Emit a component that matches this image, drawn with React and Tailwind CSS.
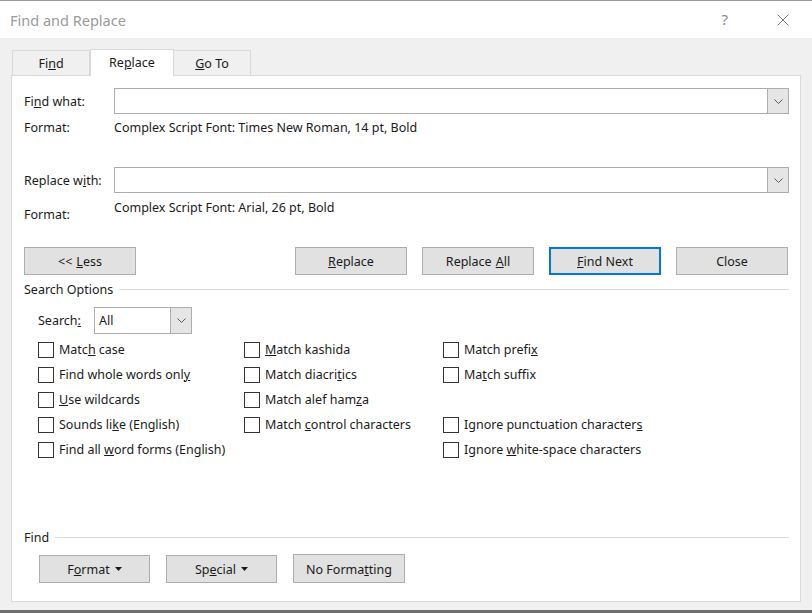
import React from 'react'

const Chevron = () => (
  <svg width="9" height="5" viewBox="0 0 9 5" className="block">
    <path d="M0.5 0.5 L4.5 4.5 L8.5 0.5" fill="none" stroke="#5a5a5a" strokeWidth="1" />
  </svg>
)

const Caret = () => (
  <svg width="7" height="4" viewBox="0 0 7 4" className="inline-block ml-[5px] mb-[2px]">
    <path d="M0 0 L7 0 L3.5 4 Z" fill="#1a1a1a" />
  </svg>
)

const Combo = ({ className = '' }) => (
  <div className={`flex h-[26px] border border-[#adadad] bg-white ${className}`}>
    <div className="flex-1" />
    <div className="w-[21px] flex items-center justify-center bg-[#e5e5e5] border-l border-[#adadad]">
      <Chevron />
    </div>
  </div>
)

const Button = ({ children, primary, className = '' }) => (
  <div
    className={`h-[28px] flex items-center justify-center pt-[2px] bg-[#e1e1e1] ${
      primary ? 'border-2 border-[#0078d7]' : 'border border-[#adadad]'
    } ${className}`}
  >
    {children}
  </div>
)

const Check = ({ children }) => (
  <div className="h-[25px] flex items-center gap-[5px]">
    <div className="w-[16px] h-[16px] border border-[#333333] bg-white shrink-0" />
    <span>{children}</span>
  </div>
)

export default function App() {
  return (
    <div className="w-[812px] h-[613px] bg-[#f0f0f0] overflow-hidden flex flex-col font-['Noto_Sans',sans-serif] text-[12.5px] leading-[16px] text-[#1a1a1a]">
      <div className="h-px bg-[#9a9a9a]" />
      <div className="h-[37px] bg-white flex items-center px-[10px]">
        <span className="text-[14.5px] text-[#9a9a9a] flex-1">Find and Replace</span>
        <span className="text-[15px] text-[#8a8a8a] mr-[49px] mt-[-1px]">?</span>
        <svg width="12" height="12" viewBox="0 0 12 12" className="mr-[13px]">
          <path d="M0.5 0.5 L11.5 11.5 M11.5 0.5 L0.5 11.5" stroke="#7a7a7a" strokeWidth="1" />
        </svg>
      </div>

      <div className="flex-1 flex flex-col px-[11px] pt-[10px]">
        <div className="flex items-end h-[27px] pl-px">
          <div className="w-[78px] h-[25px] flex items-center justify-center pt-[2px] border border-b-0 border-[#d9d9d9] bg-[#f0f0f0]">
            <span>Fi<u>n</u>d</span>
          </div>
          <div className="w-[84px] h-[27px] flex items-center justify-center border border-b-0 border-[#d9d9d9] bg-white mb-[-1px] relative">
            <span>Re<u>p</u>lace</span>
          </div>
          <div className="w-[77px] h-[25px] flex items-center justify-center pt-[2px] border border-b-0 border-l-0 border-[#d9d9d9] bg-[#f0f0f0]">
            <span><u>G</u>o To</span>
          </div>
        </div>

        <div className="h-[527px] w-[790px] border border-[#d9d9d9] bg-white pl-[12px] pr-[11px] flex flex-col">
          <div className="flex items-center mt-[12px]">
            <span className="w-[90px] pt-[2px]">Fi<u>n</u>d what:</span>
            <Combo className="flex-1" />
          </div>
          <div className="flex items-center h-[20px] mt-[3px] pt-[2px]">
            <span className="w-[90px]">Format:</span>
            <span>Complex Script Font: Times New Roman, 14 pt, Bold</span>
          </div>

          <div className="flex items-center mt-[30px]">
            <span className="w-[90px] pt-[2px]">Replace w<u>i</u>th:</span>
            <Combo className="flex-1" />
          </div>
          <div className="flex h-[30px]">
            <span className="w-[90px] mt-[14px]">Format:</span>
            <span className="mt-[7px]">Complex Script Font: Arial, 26 pt, Bold</span>
          </div>

          <div className="flex justify-between mt-[24px] pr-[1px]">
            <Button className="w-[112px]">&lt;&lt; <u className="ml-[4px]">L</u>ess</Button>
            <div className="flex gap-[15px]">
              <Button className="w-[112px]"><u>R</u>eplace</Button>
              <Button className="w-[112px]">Replace <u className="ml-[4px]">A</u>ll</Button>
              <Button primary className="w-[112px]"><u>F</u>ind Next</Button>
              <Button className="w-[112px]">Close</Button>
            </div>
          </div>

          <div className="flex items-center mt-[6px] h-[16px]">
            <span className="pt-[2px]">Search Options</span>
            <div className="flex-1 h-px bg-[#dadada] ml-[6px]" />
          </div>

          <div className="flex items-center mt-[10px] pl-[14px]">
            <span className="w-[56px]">Search<u>:</u></span>
            <div className="flex w-[98px] h-[27px] border border-[#adadad] bg-white">
              <span className="flex-1 flex items-center pl-[4px]">All</span>
              <div className="w-[21px] flex items-center justify-center bg-[#e5e5e5] border-l border-[#adadad]">
                <Chevron />
              </div>
            </div>
          </div>

          <div className="grid grid-cols-[206px_199px_1fr] mt-[3px] pl-[14px]">
            <div className="flex flex-col">
              <Check>Matc<u>h</u> case</Check>
              <Check>Find whole words onl<u>y</u></Check>
              <Check><u>U</u>se wildcards</Check>
              <Check>Sounds li<u>k</u>e (English)</Check>
              <Check>Find all <u>w</u>ord forms (English)</Check>
            </div>
            <div className="flex flex-col">
              <Check><u>M</u>atch kashida</Check>
              <Check>Match diacri<u>t</u>ics</Check>
              <Check>Match alef ham<u>z</u>a</Check>
              <Check>Match <u>c</u>ontrol characters</Check>
            </div>
            <div className="flex flex-col">
              <Check>Match prefi<u>x</u></Check>
              <Check>Ma<u>t</u>ch suffix</Check>
              <div className="h-[25px]" />
              <Check>Ignore punctuation character<u>s</u></Check>
              <Check>Ignore <u>w</u>hite-space characters</Check>
            </div>
          </div>

          <div className="flex items-center mt-[67px] h-[16px]">
            <span className="pt-[2px]">Find</span>
            <div className="flex-1 h-px bg-[#dadada] ml-[6px]" />
          </div>

          <div className="flex items-center gap-[16px] mt-[9px] pl-[15px]">
            <Button className="w-[111px]">F<u>o</u>rmat<Caret /></Button>
            <Button className="w-[111px]">Sp<u>e</u>cial<Caret /></Button>
            <Button className="w-[112px] h-[29px]">No Forma<u>t</u>ting</Button>
          </div>
        </div>
      </div>
      <div className="h-[3px] bg-[#6e6e6e]" />
    </div>
  )
}
